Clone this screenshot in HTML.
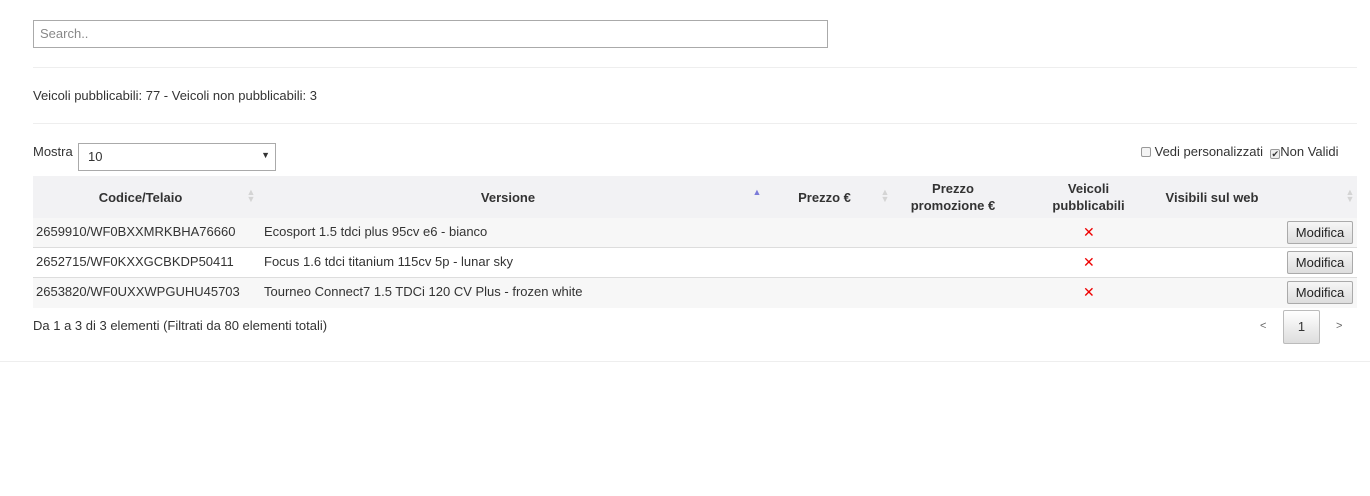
<!DOCTYPE html>
<html><head><meta charset="utf-8"><style>
*{box-sizing:border-box;margin:0;padding:0}
body{width:1370px;height:496px;background:#fff;font-family:"Liberation Sans",sans-serif;font-size:13px;color:#333;position:relative;overflow:hidden}
.a{position:absolute;white-space:nowrap}
.hr{position:absolute;height:1px;background:#eee}
.th{position:absolute;top:176px;height:42px;display:flex;align-items:center;justify-content:center;text-align:center;font-weight:bold;line-height:17px;color:#333}
.row{position:absolute;left:33px;width:1324px;height:30px}
.s{position:absolute;width:10px;color:#d4d4d4;font-size:9px;line-height:7px;text-align:center}
.btn{position:absolute;right:4px;top:3px;width:66px;height:23px;border:1px solid #aaa;border-radius:2px;background:linear-gradient(#f6f6f6,#ddd);font-size:13px;text-align:center;line-height:21px;color:#222}
.x{position:absolute;left:1050px;top:6px;color:#e00;font-size:14px}
</style></head><body>
<div class="a" style="left:33px;top:20px;width:795px;height:28px;border:1px solid #aaa;padding:5px 6px;color:#888;font-size:13px">Search..</div>
<div class="hr" style="left:33px;top:67px;width:1324px"></div>
<div class="a" style="left:33px;top:88px">Veicoli pubblicabili: 77 - Veicoli non pubblicabili: 3</div>
<div class="hr" style="left:33px;top:123px;width:1324px"></div>
<div class="a" style="left:33px;top:144px">Mostra</div>
<div class="a" style="left:78px;top:143px;width:198px;height:28px;border:1px solid #aaa;padding:5px 9px">10<span style="position:absolute;right:5px;top:6px;font-size:9px">▼</span></div>
<div class="a" style="left:1141px;top:144px"><span style="display:inline-block;width:10px;height:10px;border:1px solid #999;border-radius:2px;background:#f4f4f4;vertical-align:-1px"></span> Vedi personalizzati&nbsp; <span style="display:inline-block;width:10px;height:10px;border:1px solid #999;border-radius:2px;background:#eee;vertical-align:-1px;font-size:9px;line-height:8px;text-align:center">✔</span>Non Validi</div>
<div class="a" style="left:33px;top:176px;width:1324px;height:42px;background:#f2f2f4"></div>
<div class="th" style="left:33px;width:215px">Codice/Telaio</div>
<div class="th" style="left:258px;width:500px">Versione</div>
<div class="th" style="left:772px;width:105px">Prezzo €</div>
<div class="th" style="left:893px;width:120px">Prezzo<br>promozione €</div>
<div class="th" style="left:1020px;width:137px">Veicoli<br>pubblicabili</div>
<div class="th" style="left:1157px;width:110px">Visibili sul web</div>
<div class="s" style="left:246px;top:189px">▲<br>▼</div>
<div class="s" style="left:752px;top:189px;color:#7b7bd9">▲</div>
<div class="s" style="left:880px;top:189px">▲<br>▼</div>
<div class="s" style="left:1345px;top:189px">▲<br>▼</div>
<div class="row" style="top:218px;background:#f7f7f7;border-bottom:1px solid #ddd"><span class="a" style="left:3px;top:6px">2659910/WF0BXXMRKBHA76660</span><span class="a" style="left:231px;top:6px">Ecosport 1.5 tdci plus 95cv e6 - bianco</span><span class="x">✕</span><div class="btn">Modifica</div></div>
<div class="row" style="top:248px;background:#fff;border-bottom:1px solid #ddd"><span class="a" style="left:3px;top:6px">2652715/WF0KXXGCBKDP50411</span><span class="a" style="left:231px;top:6px">Focus 1.6 tdci titanium 115cv 5p - lunar sky</span><span class="x">✕</span><div class="btn">Modifica</div></div>
<div class="row" style="top:278px;background:#f7f7f7"><span class="a" style="left:3px;top:6px">2653820/WF0UXXWPGUHU45703</span><span class="a" style="left:231px;top:6px">Tourneo Connect7 1.5 TDCi 120 CV Plus - frozen white</span><span class="x">✕</span><div class="btn">Modifica</div></div>
<div class="a" style="left:33px;top:318px">Da 1 a 3 di 3 elementi (Filtrati da 80 elementi totali)</div>
<div class="a" style="left:1260px;top:320px;font-size:11px;color:#666">&lt;</div>
<div class="a" style="left:1283px;top:310px;width:37px;height:34px;border:1px solid #bbb;border-radius:2px;background:linear-gradient(#fff,#ddd);text-align:center;line-height:32px">1</div>
<div class="a" style="left:1336px;top:320px;font-size:11px;color:#666">&gt;</div>
<div class="hr" style="left:0;top:361px;width:1370px"></div>
</body></html>
